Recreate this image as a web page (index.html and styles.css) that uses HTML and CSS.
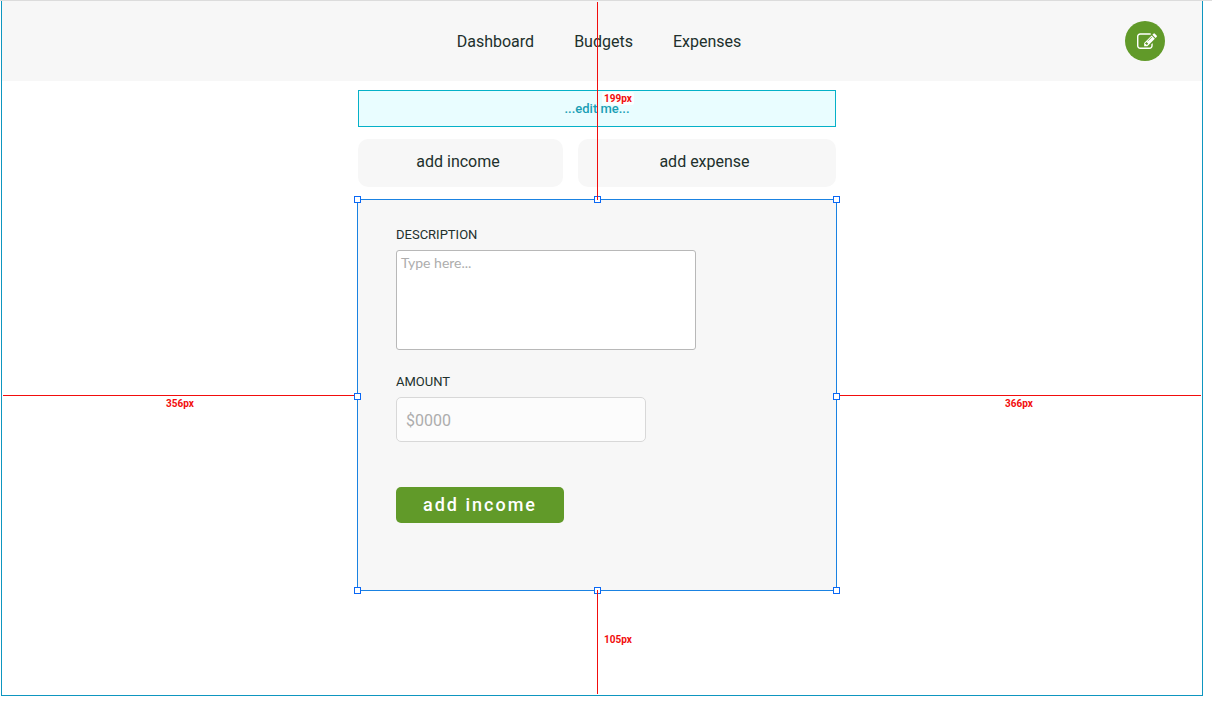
FILE: index.html
```
<!DOCTYPE html>
<html lang="en">
<head>
<meta charset="utf-8">
<meta name="viewport" content="width=device-width, initial-scale=1">
<title>Add income</title>
<link rel="stylesheet" href="styles.css">
</head>
<body>
<div class="artboard">
  <header class="topbar">
    <nav class="nav" aria-label="Main">
      <a href="#dashboard">Dashboard</a>
      <a href="#budgets">Budgets</a>
      <a href="#expenses">Expenses</a>
    </nav>
    <button class="edit-button" type="button" aria-label="Edit">
      <svg class="edit-icon" viewBox="0 -76 1792 1792" aria-hidden="true"><path d="M888 1184l116-116-152-152-116 116v56h96v96h56zm440-720q-16-16-33 1l-350 350q-17 17-1 33t33-1l350-350q17-17 1-33zm80 594v190q0 119-84.500 203.500t-203.500 84.500h-832q-119 0-203.500-84.500t-84.500-203.500v-832q0-119 84.500-203.500t203.500-84.500h832q63 0 117 25 15 7 18 23 3 17-9 29l-49 49q-14 14-32 8-23-6-45-6h-832q-66 0-113 47t-47 113v832q0 66 47 113t113 47h832q66 0 113-47t47-113v-126q0-13 9-22l64-64q15-15 35-7t20 29zm-96-738l288 288-672 672h-288v-288zm444 132l-92 92-288-288 92-92q28-28 68-28t68 28l152 152q28 28 28 68t-28 68z"/></svg>
    </button>
  </header>
  <main class="workspace">
    <div class="column">
      <div class="notice">...edit me...</div>
      <div class="tabs">
        <button class="tab" type="button">add income</button>
        <button class="tab" type="button">add expense</button>
      </div>
      <form class="panel">
        <label class="label" for="description">DESCRIPTION</label>
        <textarea class="description" id="description" placeholder="Type here..."></textarea>
        <label class="label" for="amount">AMOUNT</label>
        <input class="amount" id="amount" type="text" placeholder="$0000">
        <button class="submit" type="button">add income</button>
        <span class="handle top left"></span>
        <span class="handle top center"></span>
        <span class="handle top right"></span>
        <span class="handle middle left"></span>
        <span class="handle middle right"></span>
        <span class="handle bottom left"></span>
        <span class="handle bottom center"></span>
        <span class="handle bottom right"></span>
        <div class="guide guide-up"><span class="measure">199px</span></div>
        <div class="guide guide-down"><span class="measure">105px</span></div>
      </form>
    </div>
    <div class="gutter gutter-left"><div class="guide-across"></div><span class="measure">356px</span></div>
    <div class="gutter gutter-right"><div class="guide-across"></div><span class="measure">366px</span></div>
  </main>
</div>
</body>
</html>
```
FILE: styles.css
```
* {
  box-sizing: border-box;
}

body {
  margin: 0;
  border-top: 1px solid #dcdcdc;
  background: #fff;
  color: #21302c;
  font: 16px/20px Roboto, Arial, sans-serif;
}

button,
input,
textarea {
  margin: 0;
  font: inherit;
  color: inherit;
}

.artboard {
  margin: 0 9px 0 1px;
  border: 1px solid #0e96c0;
  border-top: 0;
}

.topbar {
  display: grid;
  grid-template-columns: 1fr auto 1fr;
  align-items: center;
  padding: 20px 37px;
  background: #f7f7f7;
}

.nav {
  grid-column: 2;
  display: flex;
  gap: 40px;
  padding: 2px 6px 0 0;
}

.nav a {
  color: inherit;
  text-decoration: none;
}

.edit-button {
  grid-column: 3;
  justify-self: end;
  display: grid;
  place-items: center;
  width: 40px;
  height: 40px;
  padding: 0 0 0 4px;
  border: 0;
  border-radius: 50%;
  background: #619a29;
}

.edit-icon {
  width: 20px;
  height: 20px;
  fill: #fff;
}

.workspace {
  display: grid;
  grid-template-columns: 355fr 480fr 365fr;
  padding: 9px 0 104px;
}

.column {
  grid-area: 1 / 2;
}

.notice {
  margin: 0 1px 12px;
  padding: 8px;
  border: 1px solid #05b1c8;
  background: #e9fdff;
  color: #1a9fb5;
  font-size: 13px;
  line-height: 19px;
  font-weight: 500;
  text-align: center;
}

.tabs {
  display: grid;
  grid-template-columns: 205fr 258fr;
  gap: 15px;
  margin: 0 1px 12px;
}

.tab {
  padding: 13px 5px 15px 0;
  border: 0;
  border-radius: 10px;
  background: #f7f7f7;
}

.panel {
  position: relative;
  display: flex;
  flex-direction: column;
  align-items: flex-start;
  padding: 25px 38px 67px;
  border: 1px solid #1a82e2;
  background: #f7f7f7;
}

.label {
  margin-bottom: 5px;
  font-size: 13px;
}

.description {
  width: 300px;
  max-width: 100%;
  height: 100px;
  margin-bottom: 22px;
  padding: 2px 4px;
  border: 1px solid #b8b8b8;
  border-radius: 3px;
  background: #fff;
  font-family: Lato, sans-serif;
  font-size: 14px;
  resize: none;
}

.amount {
  width: 250px;
  max-width: 100%;
  height: 45px;
  margin-bottom: 45px;
  padding: 2px 9px 0;
  border: 1px solid #d8d8d8;
  border-radius: 5px;
  background: #fcfcfc;
}

.description::placeholder,
.amount::placeholder {
  color: #adadad;
  opacity: 1;
}

.submit {
  padding: 8px 27px;
  border: 0;
  border-radius: 5px;
  background: #619a29;
  color: #fff;
  font-size: 18px;
  font-weight: 500;
  letter-spacing: 2px;
}

.handle {
  position: absolute;
  width: 7px;
  height: 7px;
  border: 1px solid #0a68f5;
  background: #fff;
}

.top { top: -4px; }
.middle { top: calc(50% - 2px); }
.bottom { bottom: -4px; }
.left { left: -4px; }
.center { left: calc(50% - 3px); }
.right { right: -4px; }

.guide {
  position: absolute;
  left: 50%;
  border-left: 1px solid #f20d0d;
}

.guide-up {
  bottom: 100%;
  height: 198px;
  padding: 90px 0 0 4px;
}

.guide-down {
  top: 100%;
  height: 104px;
  padding: 43px 0 0 4px;
}

.measure {
  display: block;
  padding: 0 2px;
  border-radius: 2px;
  background: rgb(255 255 255 / 80%);
  color: #f20d0d;
  font-size: 10px;
  line-height: 13px;
  font-weight: 700;
}

.gutter {
  display: flex;
  flex-direction: column;
  align-items: center;
  gap: 1px;
  padding-top: 305px;
}

.gutter-left {
  grid-area: 1 / 1;
  padding-left: 1px;
}

.gutter-right {
  grid-area: 1 / 3;
  padding-right: 1px;
}

.guide-across {
  align-self: stretch;
  border-top: 1px solid #f20d0d;
}
```
